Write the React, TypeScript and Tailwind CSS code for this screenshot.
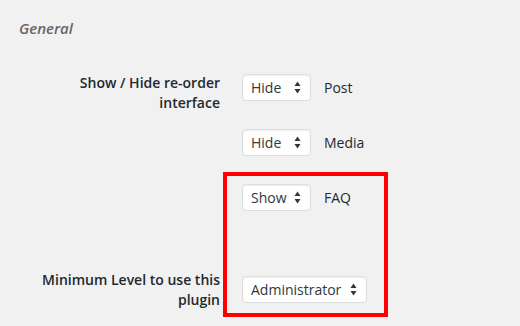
import React from "react";

function Arrows() {
  return (
    <svg width="7" height="13" viewBox="0 0 7 13" className="shrink-0">
      <polygon points="0.5,5 3.5,0.5 6.5,5" fill="#32373c" />
      <polygon points="0.5,8 3.5,12.5 6.5,8" fill="#32373c" />
    </svg>
  );
}

function Select({ value, width }: { value: string; width: string }) {
  return (
    <div
      className={`${width} h-[27px] shrink-0 bg-white border border-[#dddddd] rounded-[4px] shadow-[inset_0_1px_2px_rgba(0,0,0,0.07)] flex items-center justify-between pl-[8px] pr-[9px] text-[14px] text-[#32373c]`}
    >
      <span>{value}</span>
      <Arrows />
    </div>
  );
}

export default function App() {
  return (
    <div
      className="relative w-[520px] h-[326px] overflow-hidden bg-[#f1f1f1] text-[#23282d]"
      style={{ fontFamily: '"Open Sans", "Noto Sans", sans-serif' }}
    >
      <div className="pl-[19px] pt-[16px] text-[15px] italic font-semibold text-[#666666] leading-[24px]">
        General
      </div>

      <div className="flex flex-col mt-[33px]">
        <div className="flex items-start">
          <div className="w-[220px] text-right text-[14px] font-semibold leading-[19.5px] pl-[60px]">
            Show / Hide re-order interface
          </div>
          <div className="ml-[22px] mt-[1px] flex items-center gap-[13px] text-[14px]">
            <Select value="Hide" width="w-[69px]" />
            <span>Post</span>
          </div>
        </div>

        <div className="flex items-start mt-[17px]">
          <div className="w-[220px]" />
          <div className="ml-[22px] flex items-center gap-[13px] text-[14px]">
            <Select value="Hide" width="w-[69px]" />
            <span>Media</span>
          </div>
        </div>

        <div className="flex items-start mt-[28px]">
          <div className="w-[220px]" />
          <div className="ml-[22px] flex items-center gap-[13px] text-[14px]">
            <Select value="Show" width="w-[69px]" />
            <span>FAQ</span>
          </div>
        </div>

        <div className="flex items-center mt-[59px]">
          <div className="w-[220px] text-right text-[14px] font-semibold leading-[19.5px] pl-[20px]">
            Minimum Level to use this plugin
          </div>
          <div className="ml-[22px] flex items-center text-[14px]">
            <Select value="Administrator" width="w-[125px]" />
          </div>
        </div>
      </div>

      <div className="absolute left-[223px] top-[172px] w-[165px] h-[145px] border-4 border-[#ff0000]" />
    </div>
  );
}
